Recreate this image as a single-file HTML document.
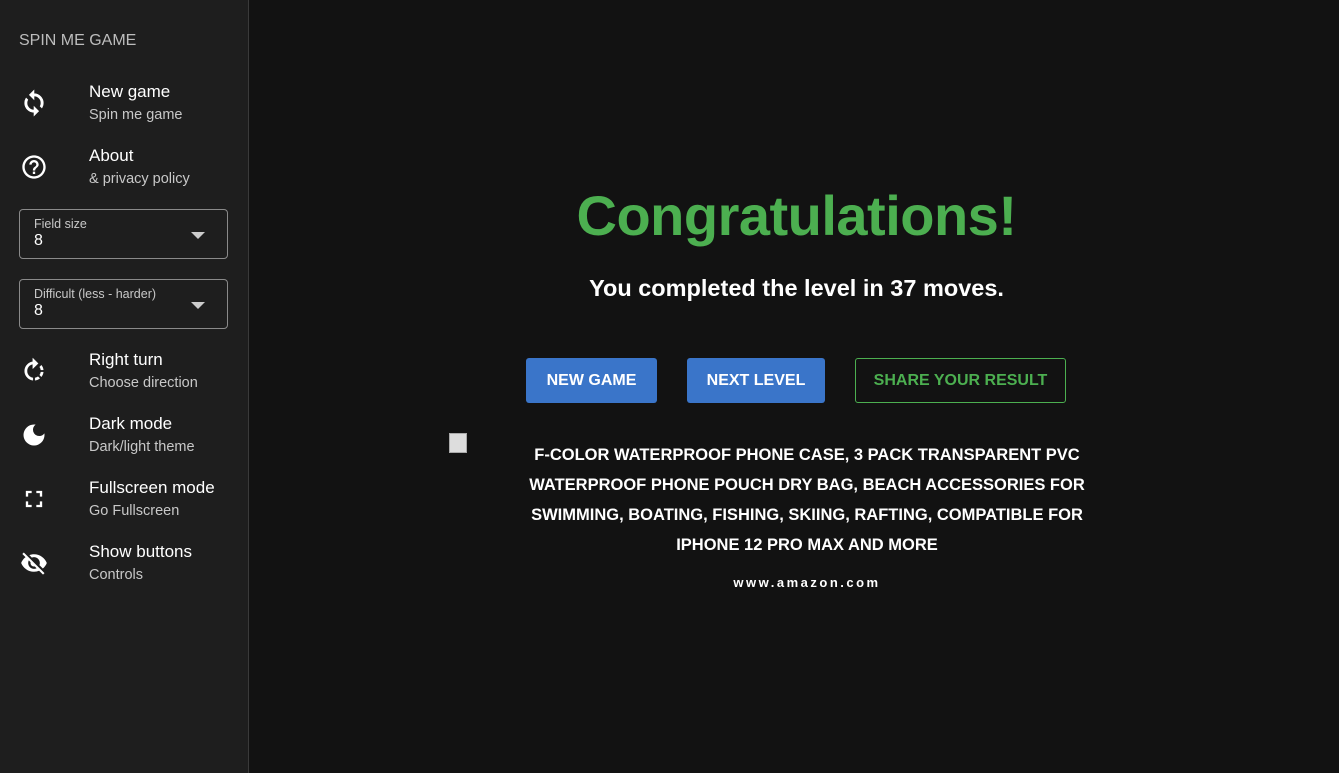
<!DOCTYPE html>
<html><head><style>
*{margin:0;padding:0;box-sizing:border-box}
body{width:1339px;height:773px;background:#121212;font-family:"Liberation Sans",sans-serif;color:#fff;position:relative;overflow:hidden}
#side{position:absolute;left:0;top:0;width:249px;height:773px;background:#1e1e1e;border-right:1px solid #3a3a3a}
.title{position:absolute;left:19px;top:32px;font-size:16px;color:#bdbdbd}
.item{position:absolute;left:0;width:248px}
.item svg{position:absolute;left:20px;width:28px;height:28px}
.item .t{position:absolute;left:89px;top:0;font-size:17px;color:#fff}
.item .s{position:absolute;left:89px;top:25px;font-size:14.5px;color:#c8c8c8}
.sel{position:absolute;left:19px;width:209px;height:50px;border:1px solid #8a8a8a;border-radius:4px}
.sel .l{position:absolute;left:14px;top:7px;font-size:12.5px;color:#c8c8c8}
.sel .v{position:absolute;left:14px;top:22px;font-size:16px;color:#fff}
.sel .a{position:absolute;right:22px;top:22px;width:0;height:0;border-left:7px solid transparent;border-right:7px solid transparent;border-top:7px solid #ccc}
h1{position:absolute;left:249px;width:1095px;top:183px;text-align:center;font-size:56px;color:#4caf50;font-weight:bold;letter-spacing:-0.5px}
.sub{position:absolute;left:249px;width:1095px;top:275px;text-align:center;font-size:23.5px;font-weight:bold}
.btn{position:absolute;top:358px;height:45px;border-radius:3px;font-size:16px;display:flex;align-items:center;justify-content:center;font-weight:bold}
.ad{position:absolute;left:520px;width:574px;top:440px;text-align:center;font-size:16.5px;font-weight:bold;line-height:30px}
.url{position:absolute;left:520px;width:574px;top:575px;text-align:center;font-size:13px;font-weight:bold;letter-spacing:2.5px}
</style></head><body>
<div id="side">
<div class="title">SPIN ME GAME</div>
<div class="item" style="top:82px"><svg viewBox="0 0 24 24" style="top:7px"><path fill="#fff" stroke="#fff" stroke-width=".5" d="M12 4V1L8 5l4 4V6c3.31 0 6 2.69 6 6 0 1.01-.25 1.97-.7 2.8l1.46 1.46C19.54 15.03 20 13.57 20 12c0-4.42-3.58-8-8-8zm0 14c-3.31 0-6-2.69-6-6 0-1.01.25-1.97.7-2.8L5.24 7.74C4.46 8.97 4 10.43 4 12c0 4.42 3.58 8 8 8v3l4-4-4-4v3z"/></svg><div class="t">New game</div><div class="s">Spin me game</div></div>
<div class="item" style="top:146px"><svg viewBox="0 0 24 24" style="top:7px"><path fill="#fff" d="M11 18h2v-2h-2v2zm1-16C6.48 2 2 6.48 2 12s4.48 10 10 10 10-4.48 10-10S17.52 2 12 2zm0 18c-4.41 0-8-3.59-8-8s3.59-8 8-8 8 3.59 8 8-3.59 8-8 8zm0-14c-2.21 0-4 1.79-4 4h2c0-1.1.9-2 2-2s2 .9 2 2c0 2-3 1.75-3 5h2c0-2.25 3-2.5 3-5 0-2.21-1.79-4-4-4z"/></svg><div class="t">About</div><div class="s">&amp; privacy policy</div></div>
<div class="sel" style="top:209px"><div class="l">Field size</div><div class="v">8</div><div class="a"></div></div>
<div class="sel" style="top:279px"><div class="l">Difficult (less - harder)</div><div class="v">8</div><div class="a"></div></div>
<div class="item" style="top:350px"><svg viewBox="0 0 24 24" style="top:7px"><path fill="#fff" stroke="#fff" stroke-width=".4" d="M15.55 5.55L11 1v3.07C7.06 4.56 4 7.92 4 12s3.05 7.44 7 7.93v-2.02c-2.84-.48-5-2.94-5-5.91s2.16-5.43 5-5.91V10l4.55-4.45zM19.93 11c-.17-1.39-.72-2.73-1.62-3.89l-1.42 1.42c.54.75.88 1.6 1.02 2.47h2.02zM13 17.9v2.02c1.39-.17 2.74-.71 3.9-1.61l-1.44-1.44c-.75.54-1.59.89-2.46 1.03zm3.89-2.42l1.42 1.41c.9-1.16 1.45-2.5 1.62-3.89h-2.02c-.14.87-.48 1.72-1.02 2.48z"/></svg><div class="t">Right turn</div><div class="s">Choose direction</div></div>
<div class="item" style="top:414px"><svg viewBox="0 0 24 24" style="top:7px"><path fill="#fff" d="M12 3a9 9 0 1 0 9 9c0-.46-.04-.92-.1-1.36a5.389 5.389 0 0 1-4.4 2.26 5.403 5.403 0 0 1-3.14-9.8c-.44-.06-.9-.1-1.36-.1z"/></svg><div class="t">Dark mode</div><div class="s">Dark/light theme</div></div>
<div class="item" style="top:478px"><svg viewBox="0 0 24 24" style="top:7px"><path fill="#fff" d="M7 14H5v5h5v-2H7v-3zm-2-4h2V7h3V5H5v5zm12 7h-3v2h5v-5h-2v3zM14 5v2h3v3h2V5h-5z"/></svg><div class="t">Fullscreen mode</div><div class="s">Go Fullscreen</div></div>
<div class="item" style="top:542px"><svg viewBox="0 0 24 24" style="top:7px"><path fill="#fff" d="M12 7c2.76 0 5 2.24 5 5 0 .65-.13 1.26-.36 1.83l2.92 2.92c1.51-1.26 2.7-2.89 3.43-4.75-1.73-4.39-6-7.5-11-7.5-1.4 0-2.74.25-3.98.7l2.16 2.16C10.74 7.13 11.35 7 12 7zM2 4.27l2.28 2.28.46.46A11.8 11.8 0 0 0 1 12c1.73 4.39 6 7.5 11 7.5 1.55 0 3.030-.3 4.38-.84l.42.42L19.73 22 21 20.73 3.27 3 2 4.27zM7.53 9.8l1.55 1.55c-.05.21-.08.43-.08.65 0 1.66 1.34 3 3 3 .22 0 .44-.03.65-.08l1.55 1.55c-.67.33-1.41.53-2.2.53-2.76 0-5-2.24-5-5 0-.79.2-1.53.53-2.2z"/></svg><div class="t">Show buttons</div><div class="s">Controls</div></div>
</div>
<h1>Congratulations!</h1>
<div class="sub">You completed the level in 37 moves.</div>
<div class="btn" style="left:526px;width:131px;background:#3a75c9">NEW GAME</div>
<div class="btn" style="left:687px;width:138px;background:#3a75c9">NEXT LEVEL</div>
<div class="btn" style="left:855px;width:211px;border:1px solid #4caf50;color:#4caf50">SHARE YOUR RESULT</div>
<div style="position:absolute;left:449px;top:433px;width:18px;height:20px;background:#ddd;border:1px solid #aaa"></div>
<div class="ad">F-COLOR WATERPROOF PHONE CASE, 3 PACK TRANSPARENT PVC WATERPROOF PHONE POUCH DRY BAG, BEACH ACCESSORIES FOR SWIMMING, BOATING, FISHING, SKIING, RAFTING, COMPATIBLE FOR IPHONE 12 PRO MAX AND MORE</div>
<div class="url">www.amazon.com</div>
</body></html>
